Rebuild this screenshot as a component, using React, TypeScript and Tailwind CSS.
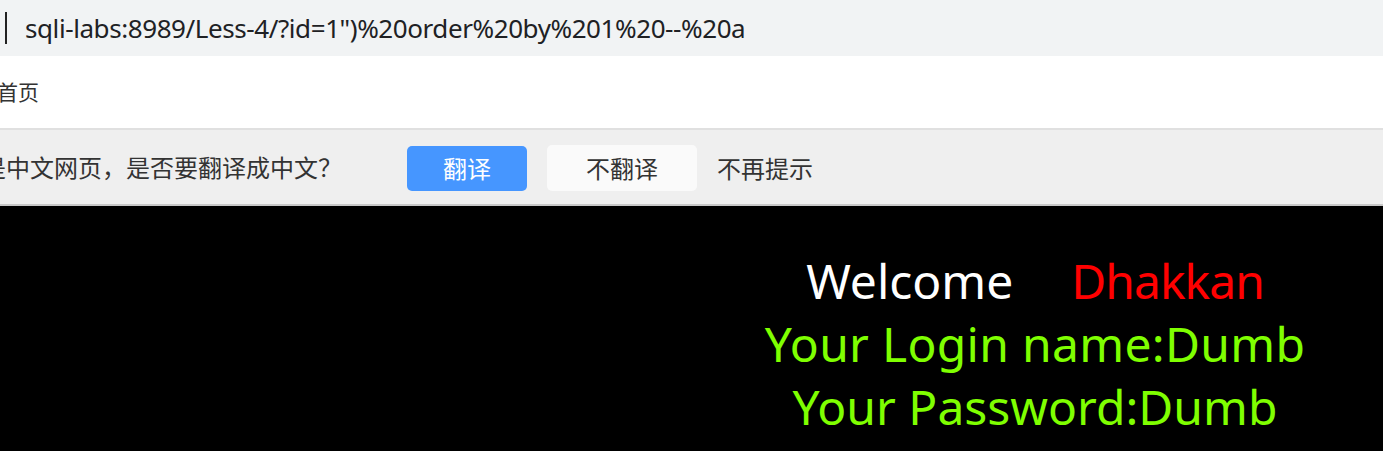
const App = () => {
  return (
    <div className="w-[1383px] h-[451px] overflow-hidden flex flex-col bg-black font-['Noto_Sans','Noto_Sans_CJK_SC',sans-serif]">
      {/* Address bar */}
      <div className="h-[56px] bg-[#f1f3f4] flex items-center shrink-0">
        <div className="ml-[5px] w-[2px] h-[32px] bg-[#222]" />
        <span className="ml-[18px] text-[26px] leading-none text-[#202124] tracking-[-0.42px]">
          sqli-labs:8989/Less-4/?id=1")%20order%20by%201%20--%20a
        </span>
      </div>

      {/* Bookmarks bar */}
      <div className="h-[74px] bg-white flex items-center shrink-0 border-b-2 border-[#e0e0e0]">
        <span className="-ml-[3px] text-[21px] text-[#333] font-['Noto_Sans_CJK_SC',sans-serif]">首页</span>
      </div>

      {/* Translate prompt */}
      <div className="h-[76px] bg-[#efefef] flex items-center shrink-0 border-b-2 border-[#c8c8c8] font-['Noto_Sans_CJK_SC',sans-serif] text-[24px] text-[#333]">
        <span className="-ml-[18px] whitespace-nowrap">是中文网页，是否要翻译成中文？</span>
        <button className="ml-[65px] w-[120px] h-[45px] mt-[2px] rounded-[5px] bg-[#4696ff] text-white text-[24px]">翻译</button>
        <button className="ml-[20px] w-[150px] h-[46px] mt-[2px] rounded-[5px] bg-[#fafafa] text-[#333] text-[24px]">不翻译</button>
        <span className="ml-[20px] mt-[2px] whitespace-nowrap">不再提示</span>
      </div>

      {/* Page */}
      <div className="flex-1 pl-[687px] pt-[43px] text-center text-[48px] leading-[63px]">
        <div>
          <span className="text-white">Welcome</span>
          <span className="ml-[58px] text-[#ff0000] tracking-[-1px]">Dhakkan</span>
        </div>
        <div className="text-[#7fff00] tracking-[0.3px]">Your Login name:Dumb</div>
        <div className="text-[#7fff00]">Your Password:Dumb</div>
      </div>
    </div>
  );
};

export default App;
